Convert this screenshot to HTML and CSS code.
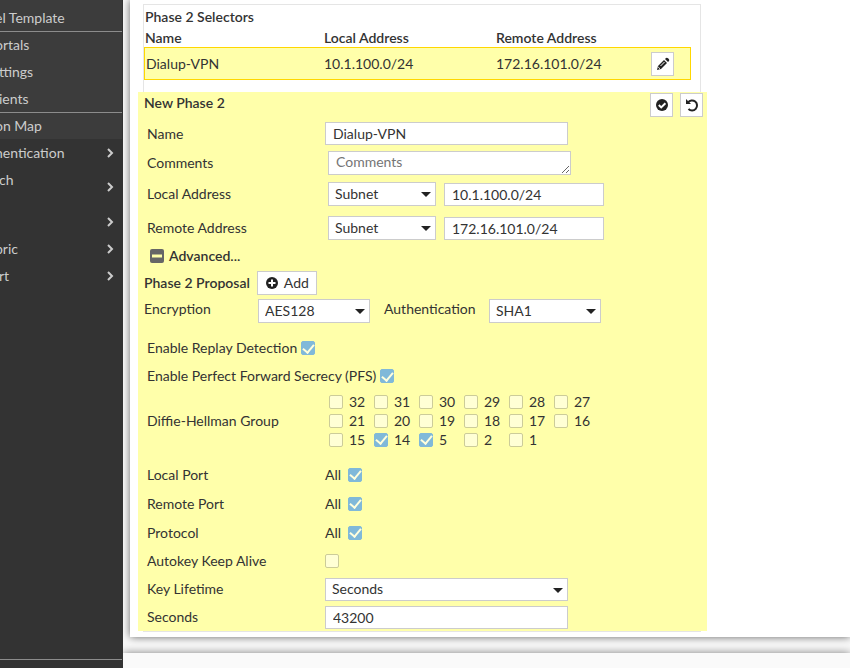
FILE: index.html
```html
<!DOCTYPE html>
<html lang="en">
<head>
    <meta charset="UTF-8">
    <meta name="viewport" content="width=device-width, initial-scale=1.0">
    <title>Phase 2 Selectors</title>
    <link rel="stylesheet" href="styles.css">
</head>
<body>
    <nav class="sidebar">
        <ul class="submenu">
            <li><a href="#">el Template</a></li>
            <li class="divided"><a href="#">ortals</a></li>
            <li><a href="#" class="flush">ttings</a></li>
            <li><a href="#" class="flush">ients</a></li>
            <li class="divided"><a href="#">on Map</a></li>
        </ul>
        <ul class="menu">
            <li><a href="#">hentication</a><svg class="chevron" viewBox="0 0 8 10"><path d="M2 1l4 4-4 4"/></svg></li>
            <li class="tall"><a href="#" class="flush">ch</a><svg class="chevron" viewBox="0 0 8 10"><path d="M2 1l4 4-4 4"/></svg></li>
            <li><svg class="chevron" viewBox="0 0 8 10"><path d="M2 1l4 4-4 4"/></svg></li>
            <li><a href="#">bric</a><svg class="chevron" viewBox="0 0 8 10"><path d="M2 1l4 4-4 4"/></svg></li>
            <li><a href="#" class="flush">rt</a><svg class="chevron" viewBox="0 0 8 10"><path d="M2 1l4 4-4 4"/></svg></li>
        </ul>
        <div class="sidebar-footer"></div>
    </nav>

    <main class="content">
        <div class="panel">
            <section class="selectors">
                <h2>Phase 2 Selectors</h2>
                <table class="selector-table">
                    <thead>
                        <tr>
                            <th class="col-name">Name</th>
                            <th class="col-local">Local Address</th>
                            <th>Remote Address</th>
                            <th class="col-edit"></th>
                        </tr>
                    </thead>
                    <tbody>
                        <tr>
                            <td>Dialup-VPN</td>
                            <td>10.1.100.0/24</td>
                            <td>172.16.101.0/24</td>
                            <td>
                                <button type="button" class="icon-btn" aria-label="Edit">
                                    <svg viewBox="0 0 14 14"><path d="M1 13l1-4 6-6 3 3-6 6z"/><path d="M9 2l1-1q1-.6 2 .2l.8.8q.8 1 .2 2l-1 1z"/><path class="cut" d="M2.2 10l1.800 1.800M4.500 9l4-4"/></svg>
                                </button>
                            </td>
                        </tr>
                    </tbody>
                </table>

                <form class="phase-form">
                    <div class="form-head">
                        <h2>New Phase 2</h2>
                        <div class="actions">
                            <button type="button" class="icon-btn" aria-label="OK">
                                <svg viewBox="0 0 14 14"><circle cx="7" cy="7" r="6"/><path class="mark" d="M3.8 7l2.4 2.4 4.2-4.2"/></svg>
                            </button>
                            <button type="button" class="icon-btn" aria-label="Undo">
                                <svg viewBox="0 0 14 14"><path class="line" d="M3 4.500A5 5 0 1 1 3.500 11"/><path d="M1 1v5h5z"/></svg>
                            </button>
                        </div>
                    </div>

                    <div class="row">
                        <label for="name">Name</label>
                        <input type="text" id="name" class="wide" value="Dialup-VPN">
                    </div>
                    <div class="row indent">
                        <label for="comments">Comments</label>
                        <textarea id="comments" class="wide" rows="1" placeholder="Comments"></textarea>
                    </div>
                    <div class="row indent address">
                        <label for="local-type">Local Address</label>
                        <span class="select"><select id="local-type"><option>Subnet</option></select></span>
                        <input type="text" aria-label="Local subnet" value="10.1.100.0/24">
                    </div>
                    <div class="row indent address">
                        <label for="remote-type">Remote Address</label>
                        <span class="select"><select id="remote-type"><option>Subnet</option></select></span>
                        <input type="text" aria-label="Remote subnet" value="172.16.101.0/24">
                    </div>

                    <button type="button" class="advanced">
                        <svg viewBox="0 0 14 14"><rect width="14" height="14" rx="2"/><path d="M2 7h10"/></svg>
                        Advanced...
                    </button>

                    <div class="proposal">
                        <h2>Phase 2 Proposal</h2>
                        <button type="button" class="add-btn">
                            <svg viewBox="0 0 14 14"><circle cx="7" cy="7" r="6"/><path class="mark" d="M7 3.500v7M3.500 7h7"/></svg>
                            Add
                        </button>
                    </div>
                    <div class="algorithms">
                        <label for="encryption">Encryption</label>
                        <span class="select"><select id="encryption"><option>AES128</option></select></span>
                        <label for="authentication">Authentication</label>
                        <span class="select"><select id="authentication"><option>SHA1</option></select></span>
                    </div>

                    <div class="row auto">
                        <label for="replay">Enable Replay Detection</label>
                        <input type="checkbox" id="replay" checked>
                    </div>
                    <div class="row auto">
                        <label for="pfs">Enable Perfect Forward Secrecy (PFS)</label>
                        <input type="checkbox" id="pfs" checked>
                    </div>
                    <div class="row indent dh" role="group" aria-labelledby="dh-label">
                        <span class="label" id="dh-label">Diffie-Hellman Group</span>
                        <div class="groups">
                            <label><input type="checkbox">32</label>
                            <label><input type="checkbox">31</label>
                            <label><input type="checkbox">30</label>
                            <label><input type="checkbox">29</label>
                            <label><input type="checkbox">28</label>
                            <label><input type="checkbox">27</label>
                            <label><input type="checkbox">21</label>
                            <label><input type="checkbox">20</label>
                            <label><input type="checkbox">19</label>
                            <label><input type="checkbox">18</label>
                            <label><input type="checkbox">17</label>
                            <label><input type="checkbox">16</label>
                            <label><input type="checkbox">15</label>
                            <label><input type="checkbox" checked>14</label>
                            <label><input type="checkbox" checked>5</label>
                            <label><input type="checkbox">2</label>
                            <label><input type="checkbox">1</label>
                        </div>
                    </div>
                    <div class="row">
                        <span class="label">Local Port</span>
                        <label class="all">All <input type="checkbox" checked></label>
                    </div>
                    <div class="row">
                        <span class="label">Remote Port</span>
                        <label class="all">All <input type="checkbox" checked></label>
                    </div>
                    <div class="row">
                        <span class="label">Protocol</span>
                        <label class="all">All <input type="checkbox" checked></label>
                    </div>
                    <div class="row short">
                        <label for="keepalive">Autokey Keep Alive</label>
                        <input type="checkbox" id="keepalive">
                    </div>
                    <div class="row short">
                        <label for="lifetime">Key Lifetime</label>
                        <span class="select wide"><select id="lifetime"><option>Seconds</option></select></span>
                    </div>
                    <div class="row short">
                        <label for="seconds">Seconds</label>
                        <input type="text" id="seconds" class="wide" value="43200">
                    </div>
                </form>
            </section>
        </div>
        <footer class="button-bar"></footer>
    </main>
</body>
</html>
```
FILE: styles.css
```css
* {
    box-sizing: border-box;
}

body {
    margin: 0;
    display: flex;
    min-height: 100vh;
    font-family: Lato, sans-serif;
    font-size: 14px;
    line-height: 18px;
    color: #333;
    background-color: #f9f9f9;
}

h2 {
    margin: 0;
    font-size: 14px;
    font-weight: 600;
}

/* Sidebar */
.sidebar {
    flex: none;
    width: 123px;
    display: flex;
    flex-direction: column;
    overflow: hidden;
    background-color: #333;
}

.sidebar ul {
    margin: 0;
    padding: 0;
    list-style: none;
}

.sidebar a {
    margin-left: -5px;
    color: #ccc;
    text-decoration: none;
    white-space: nowrap;
}

.sidebar .flush {
    margin-left: -1px;
}

.sidebar li {
    display: flex;
    align-items: center;
    height: 27px;
}

.sidebar .submenu {
    padding-top: 4px;
    margin-right: 1px;
    background-color: #3c3c3c;
}

.sidebar .divided {
    border-top: 1px solid #8c8c8c;
}

.sidebar .menu li {
    padding-right: 9px;
}

.sidebar .menu .tall {
    height: 42px;
}

.tall a {
    align-self: flex-start;
    padding-top: 5px;
}

.chevron {
    width: 8px;
    height: 10px;
    margin-left: auto;
    fill: none;
    stroke: #ccc;
    stroke-width: 2;
}

.sidebar-footer {
    height: 9px;
    margin: auto 1px 0 0;
    border-top: 1px solid #8c8c8c;
}

/* Content */
.content {
    flex: 1;
    display: flex;
    flex-direction: column;
    overflow: hidden;
}

.panel {
    margin-left: 7px;
    padding: 4px 13px 5px;
    background-color: #fff;
    box-shadow: 0 0 8px rgba(0, 0, 0, 0.6);
}

.button-bar {
    flex: 1;
    margin-top: 16px;
    background-color: #fafafa;
    box-shadow: 0 0 8px rgba(0, 0, 0, 0.5);
}

.selectors {
    max-width: 558px;
    border: 1px solid #e5e5e5;
}

.selectors > h2 {
    padding: 3px 0 3px 1px;
}

.selector-table {
    width: calc(100% - 9px);
    margin-bottom: 12px;
    border-spacing: 0;
    table-layout: fixed;
}

.selector-table th {
    height: 18px;
    padding: 0 1px;
    font-weight: 600;
    text-align: left;
    vertical-align: top;
    line-height: 17px;
}

.selector-table td {
    height: 33px;
    padding: 0 1px;
    background-color: #ffffaa;
    border: solid #ffd700;
    border-width: 1px 0;
}

.selector-table td:first-child {
    border-left-width: 1px;
}

.selector-table td:last-child {
    border-right-width: 1px;
}

.col-name {
    width: 179px;
}

.col-local {
    width: 172px;
}

.col-edit {
    width: 41px;
}

/* Form */
.phase-form {
    margin: 0 -7px 0 -6px;
    background-color: #ffffaa;
}

.form-head {
    display: flex;
    justify-content: space-between;
    height: 27px;
    padding: 1px 4px 0 6px;
}

.form-head h2 {
    line-height: 20px;
}

.actions {
    display: flex;
    gap: 7px;
}

button {
    font: inherit;
    color: inherit;
    cursor: pointer;
}

.icon-btn {
    display: flex;
    align-items: center;
    justify-content: center;
    width: 23px;
    height: 24px;
    padding: 0;
    background-color: #fff;
    border: 1px solid #ccc;
}

.icon-btn svg,
.add-btn svg {
    flex: none;
    width: 14px;
    height: 14px;
    fill: #222;
}

.icon-btn .mark,
.add-btn .mark,
.icon-btn .cut,
.icon-btn .line {
    fill: none;
    stroke: #fff;
    stroke-width: 2;
}

.icon-btn .cut {
    stroke-width: 1;
}

.icon-btn .line {
    stroke: #222;
}

.row {
    display: flex;
    align-items: center;
    height: 29px;
    padding-left: 9px;
}

.row > label:first-child,
.row > .label {
    width: 178px;
}

.row.indent > label:first-child,
.row.indent > .label {
    width: 181px;
}

.row.auto {
    gap: 4px;
    height: 28px;
}

.row.auto > label:first-child {
    width: auto;
}

.row.short {
    height: 28px;
}

.row.address {
    height: 34px;
}

.address .select {
    width: 108px;
    margin-right: 8px;
}

.address input {
    width: 160px;
}

input[type="text"],
textarea,
select {
    height: 23px;
    padding: 0 7px;
    font: inherit;
    color: inherit;
    background-color: #fff;
    border: 1px solid #ccc;
    border-radius: 0;
}

textarea {
    height: 24px;
    padding-top: 1px;
    overflow: hidden;
    resize: vertical;
}

.wide {
    width: 243px;
}

.select {
    position: relative;
    display: flex;
}

.select select {
    width: 100%;
    height: 24px;
    padding-left: 6px;
    appearance: none;
}

.wide select {
    height: 23px;
}

.select::after {
    content: "";
    position: absolute;
    top: 10px;
    right: 5px;
    border: solid transparent;
    border-width: 5px 5px 0;
    border-top-color: #222;
    pointer-events: none;
}

input[type="checkbox"] {
    display: grid;
    place-content: center;
    width: 14px;
    height: 14px;
    margin: 0;
    appearance: none;
    background-color: rgba(255, 255, 255, 0.5);
    border: 1px solid #cccc99;
    border-radius: 2px;
}

input[type="checkbox"]:checked {
    background-color: #80b9d9;
    border-color: #80b9d9;
}

input[type="checkbox"]:checked::before {
    content: "";
    width: 5px;
    height: 9px;
    margin-bottom: 2px;
    border: solid #ffffdd;
    border-width: 0 2px 2px 0;
    transform: rotate(40deg);
}

.advanced {
    display: flex;
    align-items: center;
    gap: 5px;
    height: 22px;
    padding: 0 0 0 12px;
    font-weight: 600;
    background: none;
    border: none;
}

.advanced svg {
    width: 14px;
    height: 14px;
    fill: #666;
    stroke: #ffffaa;
    stroke-width: 3;
}

.advanced rect {
    stroke: none;
}

.proposal {
    display: flex;
    align-items: center;
    gap: 7px;
    height: 32px;
    padding-left: 6px;
}

.add-btn {
    display: flex;
    align-items: center;
    gap: 5px;
    height: 24px;
    padding: 0 7px;
    background-color: #fff;
    border: 1px solid #ccc;
}

.algorithms {
    display: grid;
    grid-template-columns: 114px 112px 119px 112px;
    align-items: start;
    padding: 0 0 11px 6px;
}

.algorithms label {
    padding-top: 1px;
}

.algorithms label:nth-of-type(2) {
    padding-left: 14px;
}

.row.dh {
    height: auto;
    padding-top: 2px;
    padding-bottom: 11px;
}

.groups {
    display: grid;
    grid-template-columns: repeat(6, 45px);
    grid-auto-rows: 19px;
    align-items: center;
    padding-left: 1px;
}

.groups label {
    display: flex;
    align-items: center;
    gap: 6px;
}

.all {
    display: flex;
    align-items: center;
    gap: 7px;
}
```
